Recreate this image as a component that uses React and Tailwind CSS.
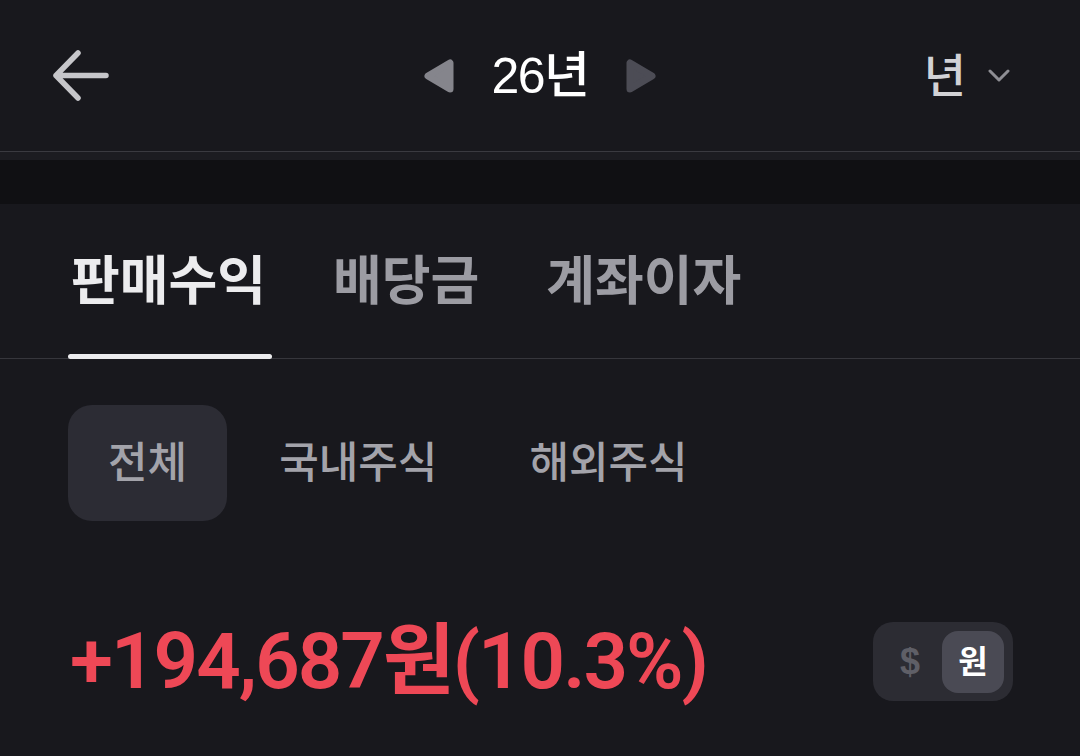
import { useState } from 'react';

const KR = { fontFamily: '"Liberation Sans", "Noto Sans CJK KR", sans-serif' };
const NUM = { fontFamily: 'Roboto, "Noto Sans CJK KR", sans-serif' };

const tabs = ['판매수익', '배당금', '계좌이자'];
const markets = ['전체', '국내주식', '해외주식'];

function BackArrow() {
  return (
    <svg width="58" height="52" viewBox="0 0 58 52" fill="none">
      <path
        d="M3 25.5H53M3 25.5L25 3M3 25.5L25 48"
        stroke="#c6c6ca"
        strokeWidth="5.5"
        strokeLinecap="round"
        strokeLinejoin="round"
      />
    </svg>
  );
}

function Triangle({ dir, color }) {
  // rounded triangle for prev / next year
  const pts = dir === 'left' ? '4,17 26,4 26,30' : '26,17 4,4 4,30';
  return (
    <svg width="30" height="34" viewBox="0 0 30 34">
      <polygon points={pts} fill={color} stroke={color} strokeWidth="7" strokeLinejoin="round" />
    </svg>
  );
}

export default function App() {
  const [tab, setTab] = useState(0);
  const [market, setMarket] = useState(0);
  const [unit, setUnit] = useState('won');

  return (
    <div className="min-h-screen w-full bg-[#18181d] text-white" style={KR}>
      {/* top bar */}
      <div className="grid h-[152px] grid-cols-[1fr_auto_1fr] items-center border-b border-[#3a3a40] px-[53px]">
        <div className="flex items-center">
          <BackArrow />
        </div>
        <div className="flex items-center gap-[37px]">
          <Triangle dir="left" color="#85858c" />
          <span className="text-[50px] font-medium leading-none tracking-[-0.03em] text-white">26년</span>
          <Triangle dir="right" color="#4c4c55" />
        </div>
        <div className="flex items-center justify-end gap-[22px] pr-[17px]">
          <span className="text-[46px] font-medium leading-none text-[#d2d2d6]">년</span>
          <svg width="22" height="14" viewBox="0 0 22 14" fill="none">
            <path d="M2 2L11 11L20 2" stroke="#8e8e94" strokeWidth="3" strokeLinecap="round" strokeLinejoin="round" />
          </svg>
        </div>
      </div>

      <div className="h-[8px] bg-[#1c1c21]" />
      <div className="h-[44px] bg-[#101013]" />

      {/* income type tabs */}
      <div className="flex gap-[61px] border-b border-[#36363c] px-[68px] pt-[49px]">
        {tabs.map((t, i) => (
          <button key={t} onClick={() => setTab(i)} className="-mb-px flex flex-col items-stretch">
            <span
              className={`block h-[58px] px-[3px] text-[53px] font-bold leading-[58px] ${
                i === tab ? 'text-[#ececee]' : 'text-[#9c9ca3]'
              }`}
            >
              {t}
            </span>
            <span
              className={`-mr-[3px] mt-[43px] block h-[5px] rounded-full ${
                i === tab ? 'bg-[#ececee]' : 'bg-transparent'
              }`}
            />
          </button>
        ))}
      </div>

      {/* market filter */}
      <div className="mt-[46px] flex gap-[12px] px-[68px]">
        {markets.map((m, i) => (
          <button
            key={m}
            onClick={() => setMarket(i)}
            className={`flex h-[116px] items-center rounded-[24px] px-[40px] text-[43px] font-medium text-[#a3a3aa] ${
              i === market ? 'bg-[#2c2c34]' : 'bg-transparent'
            }`}
          >
            {m}
          </button>
        ))}
      </div>

      {/* total realized profit */}
      <div className="mt-[101px] flex items-center justify-between pl-[70px] pr-[67px]">
        <span
          className="text-[78px] font-semibold leading-none tracking-[-0.025em] text-[#ee4856]"
          style={NUM}
        >
          +194,687원(10.3%)
        </span>
        <div className="flex h-[79px] items-center gap-[4px] rounded-[20px] bg-[#2c2c33] px-[9px]">
          <button
            onClick={() => setUnit('usd')}
            className={`flex h-[62px] w-[56px] items-center justify-center rounded-[16px] text-[36px] font-bold ${
              unit === 'usd' ? 'bg-[#4a4a54] text-white' : 'text-[#5f5f67]'
            }`}
          >
            $
          </button>
          <button
            onClick={() => setUnit('won')}
            className={`flex h-[62px] w-[62px] items-center justify-center rounded-[16px] text-[32px] font-bold ${
              unit === 'won' ? 'bg-[#4a4a54] text-white' : 'text-[#5f5f67]'
            }`}
          >
            원
          </button>
        </div>
      </div>
    </div>
  );
}
